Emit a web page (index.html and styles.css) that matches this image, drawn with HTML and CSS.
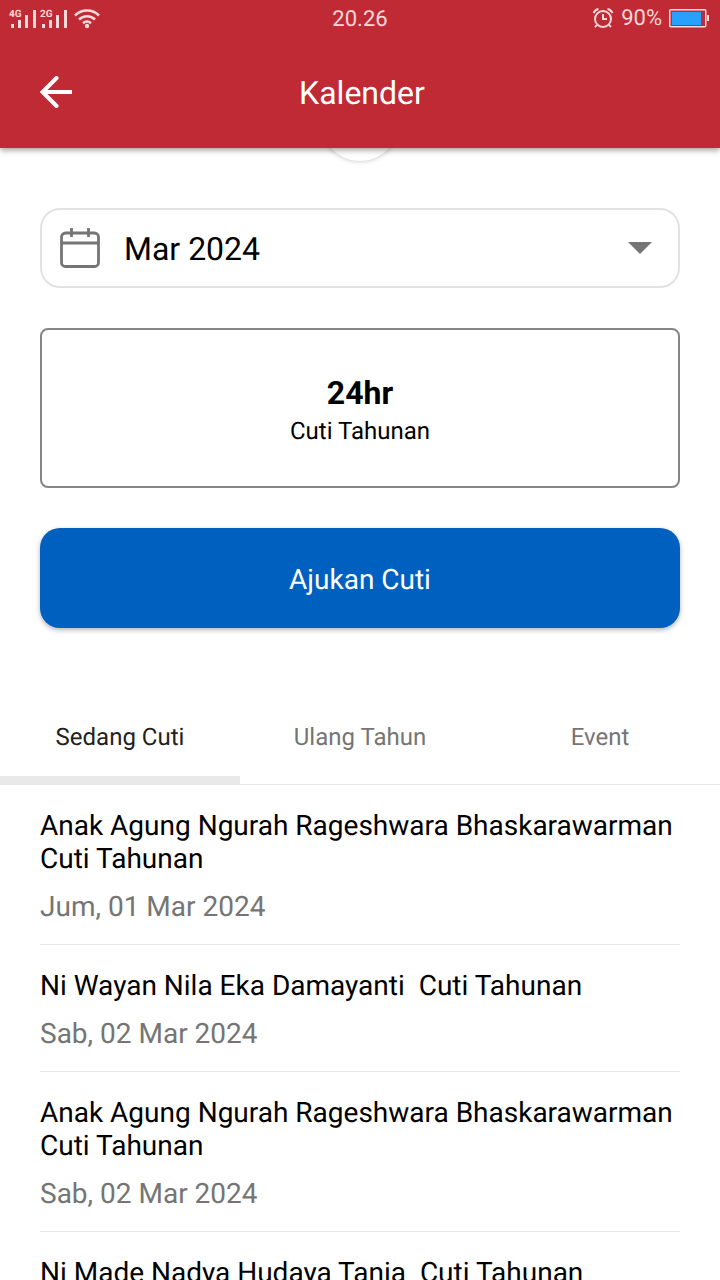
FILE: index.html
```html
<!DOCTYPE html>
<html lang="id">
<head>
<meta charset="utf-8">
<meta name="viewport" content="width=device-width, initial-scale=1">
<title>Kalender</title>
<link rel="stylesheet" href="styles.css">
</head>
<body>
<div class="app">
  <header class="top">
    <div class="status">
      <div class="status-left">
        <svg class="signals" width="92" height="24" viewBox="0 0 92 24" aria-hidden="true">
          <g fill="currentColor">
            <text class="net" x="0" y="12">4G</text>
            <path d="M2 19h3v4H2zM9 15h3v8H9zM16 10h3v13h-3zM24 5h3v18h-3z"/>
            <text class="net" x="31" y="12">2G</text>
            <path d="M33 19h3v4h-3zM40 15h3v8h-3zM47 10h3v13h-3zM55 5h3v18h-3z"/>
            <circle cx="78" cy="21" r="2.200"/>
          </g>
          <g fill="none" stroke="currentColor" stroke-width="2.600">
            <path d="M66 10.500a17 17 0 0 1 24 0M70 14.500a11.500 11.500 0 0 1 16 0M74 18.200a6 6 0 0 1 8 0"/>
          </g>
        </svg>
      </div>
      <span class="clock">20.26</span>
      <div class="status-right">
        <svg width="22" height="22" viewBox="0 0 22 22" fill="none" stroke="currentColor" stroke-width="2" aria-hidden="true">
          <circle cx="11" cy="12" r="8"/>
          <path d="M11 7v5h4M1.500 6a7 7 0 0 1 5-4M20.500 6a7 7 0 0 0-5-4M5 18l-2 2M17 18l2 2"/>
        </svg>
        <span>90%</span>
        <svg width="40" height="20" viewBox="0 0 40 20" aria-hidden="true">
          <rect x="0.750" y="1.750" width="36" height="17" rx="1" fill="none" stroke="currentColor" stroke-width="1.500"/>
          <rect x="3" y="4" width="29" height="13" fill="#28a0ff"/>
          <path d="M38 7h2v6h-2z" fill="currentColor"/>
        </svg>
      </div>
    </div>
    <div class="bar">
      <button class="back" type="button" aria-label="Kembali">
        <svg width="32" height="32" viewBox="0 0 32 32" fill="none" stroke="currentColor" stroke-width="4" aria-hidden="true">
          <path d="M32 16H4"/><path d="M16.500 2L2.500 16l14 14" stroke-linecap="round"/>
        </svg>
      </button>
      <h1 class="title">Kalender</h1>
    </div>
    <div class="refresh"></div>
  </header>

  <main class="content">
    <div class="panel">
      <div class="month">
        <svg class="cal" width="40" height="40" viewBox="0 0 40 40" fill="none" stroke="currentColor" stroke-width="2.800" aria-hidden="true">
          <rect x="1.500" y="5" width="37" height="33.500" rx="4"/>
          <path d="M1.500 15h37M11.500 0v9M28.500 0v9"/>
        </svg>
        <select class="month-select" aria-label="Bulan"><option>Mar 2024</option></select>
        <svg class="caret" width="24" height="12" viewBox="0 0 24 12" aria-hidden="true"><path d="M0 0h24L12 12z" fill="currentColor"/></svg>
      </div>
      <section class="quota">
        <strong class="quota-value">24hr</strong>
        <span class="quota-label">Cuti Tahunan</span>
      </section>
      <button class="submit" type="button">Ajukan Cuti</button>
    </div>

    <div class="tabs" role="tablist">
      <button class="tab tab-active" type="button" role="tab" aria-selected="true">Sedang Cuti</button>
      <button class="tab" type="button" role="tab" aria-selected="false">Ulang Tahun</button>
      <button class="tab" type="button" role="tab" aria-selected="false">Event</button>
    </div>

    <ul class="list">
      <li class="item"><p class="name">Anak Agung Ngurah Rageshwara Bhaskarawarman  Cuti Tahunan</p><p class="date">Jum, 01 Mar 2024</p></li>
      <li class="item"><p class="name">Ni Wayan Nila Eka Damayanti  Cuti Tahunan</p><p class="date">Sab, 02 Mar 2024</p></li>
      <li class="item"><p class="name">Anak Agung Ngurah Rageshwara Bhaskarawarman  Cuti Tahunan</p><p class="date">Sab, 02 Mar 2024</p></li>
      <li class="item"><p class="name">Ni Made Nadya Hudaya Tania  Cuti Tahunan</p></li>
    </ul>
  </main>
</div>
</body>
</html>
```
FILE: styles.css
```css
* { box-sizing: border-box; }

body {
  margin: 0;
  background: #fff;
  color: #000;
  font-family: Roboto, "Liberation Sans", sans-serif;
  text-rendering: geometricPrecision;
}

button, select { font: inherit; text-rendering: inherit; }

.app {
  display: flex;
  flex-direction: column;
  height: 100vh;
}

.top {
  position: relative;
  z-index: 1;
  flex: none;
  background: #c02a35;
  color: #fff;
  box-shadow: 0 2px 6px rgba(0, 0, 0, 0.4);
}

.status {
  display: grid;
  grid-template-columns: 1fr auto 1fr;
  align-items: center;
  height: 36px;
  padding: 0 11px 0 9px;
  color: #ffd8d8;
  font-size: 22px;
}

.status-left, .status-right { display: flex; align-items: center; }
.status-right { justify-content: flex-end; gap: 7px; }
.signals { margin-top: -2px; }
.net { font-size: 10px; font-weight: 700; }
.clock { padding: 2px 0 0 2px; }

.bar {
  display: grid;
  grid-template-columns: 32px 1fr 32px;
  align-items: center;
  height: 112px;
  padding: 0 40px;
}

.back {
  display: flex;
  padding: 0;
  border: 0;
  background: none;
  color: #fff;
}

.title {
  margin: 0;
  padding: 2px 0 0 4px;
  font-size: 32px;
  font-weight: 400;
  text-align: center;
}

/* Pull-to-refresh bubble, mostly tucked behind the header */
.refresh {
  position: absolute;
  top: 100%;
  left: calc(50% - 40px);
  width: 80px;
  height: 20px;
  overflow: hidden;
}

.refresh::before {
  content: "";
  position: absolute;
  bottom: 7px;
  left: 0;
  width: 80px;
  height: 80px;
  border-radius: 50%;
  box-shadow: 0 1px 4px rgba(0, 0, 0, 0.18);
}

.content {
  flex: 1;
  min-height: 0;
  overflow-y: auto;
  scrollbar-width: none;
}

.panel {
  display: flex;
  flex-direction: column;
  gap: 40px;
  padding: 60px 40px;
}

.month {
  display: grid;
  grid-template-columns: 40px 1fr 24px;
  align-items: center;
  gap: 20px;
  height: 80px;
  padding: 0 26px 0 18px;
  border: 2px solid #e2e2e2;
  border-radius: 20px;
  color: #757575;
}

.month-select {
  appearance: none;
  height: 76px;
  padding: 2px 4px 0;
  border: 0;
  background: none;
  color: #000;
  font-size: 32px;
}

.quota {
  display: flex;
  flex-direction: column;
  align-items: center;
  justify-content: center;
  height: 160px;
  padding-top: 6px;
  border: 2px solid #858585;
  border-radius: 8px;
}

.quota-value { font-size: 32px; line-height: 40px; }
.quota-label { font-size: 24px; line-height: 36px; }

.submit {
  height: 100px;
  padding: 2px 0 0;
  border: 0;
  border-radius: 20px;
  background: #0060c0;
  color: #fff;
  font-size: 28px;
  box-shadow: 0 2px 5px rgba(0, 0, 0, 0.3);
}

.tabs {
  display: grid;
  grid-template-columns: repeat(3, 1fr);
  height: 97px;
  border-bottom: 1px solid #e8e8e8;
}

.tab {
  padding: 10px 0 0;
  border: 0;
  border-bottom: 8px solid transparent;
  background: none;
  color: #757575;
  font-size: 24px;
}

.tab-active {
  border-bottom-color: #e9e9e9;
  color: #222;
}

.list {
  margin: 0;
  padding: 0 40px;
  list-style: none;
}

.item {
  padding: 24px 0 21px;
  border-bottom: 1px solid #e8e8e8;
}

.name, .date {
  margin: 0;
  font-size: 28px;
  line-height: 33px;
}

.name { white-space: pre-wrap; }
.date { margin-top: 15px; color: #757575; }
```
